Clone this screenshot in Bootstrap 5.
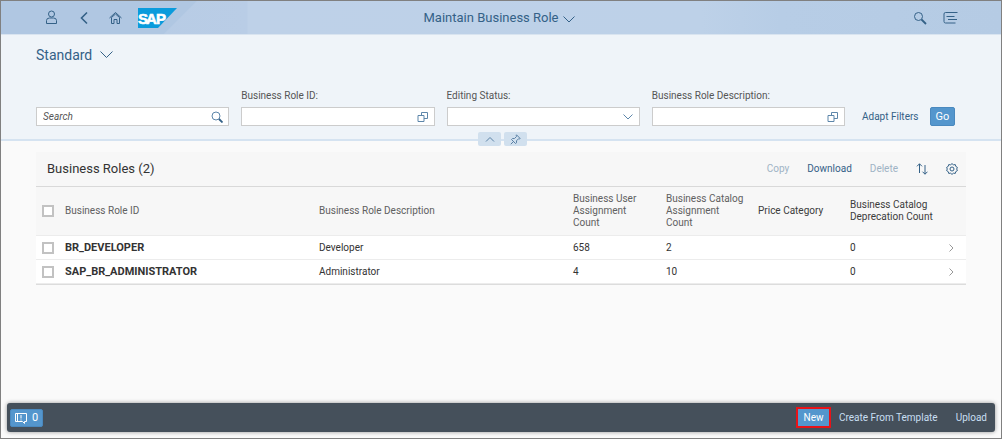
<!DOCTYPE html>
<html lang="en">
<head>
<meta charset="utf-8">
<meta name="viewport" content="width=device-width, initial-scale=1">
<title>Maintain Business Role</title>
<link href="https://cdn.jsdelivr.net/npm/bootstrap@5.3.0/dist/css/bootstrap.min.css" rel="stylesheet">
<style>
body{font-family:Roboto,"Liberation Sans",sans-serif;font-size:10px;line-height:12px;color:#333;background:#fafafa}
.app{border:1px solid #808080}
svg{display:block;fill:none;stroke:currentColor;flex:none}
.plain{background:none;border:0;padding:0;color:#346187;font-size:10px;line-height:12px}
.plain:disabled{color:#9fb3c5}
.shell{height:34px;padding:0 35px;border-bottom:1px solid #d9e4f0;background:linear-gradient(135deg,#b0c7e2 0,#b0c7e2 138px,transparent 139px),linear-gradient(90deg,#b5cae4,#b9cde6 246px,#bed1e8 247px,#bdd1e8 70%,#b7cde6 78%,#b5cbe4)}
.shell .shell-title{font-size:13px;line-height:18px;padding-left:4px}
.filters{background:#eff4f9;padding:11px 35px 13px;border-bottom:2px solid #d5e3f1}
.variant{font-size:14px;line-height:18px}
.filter-row{gap:12px;margin-top:26px}
.filter-row label{color:#555;display:block;height:12px;margin-bottom:5px}
.field{position:relative}
.field input,.field select{width:100%;height:19px;border:1px solid #ccc;border-radius:0;background:#fff;padding:0 24px 0 6px;font-size:10px;line-height:14px;appearance:none;color:#333;display:block}
.field input::placeholder{color:#555;font-style:italic;opacity:1}
.field svg{position:absolute;right:6px;top:50%;transform:translateY(-50%);color:#5d86aa;pointer-events:none}
.filter-actions{width:109px;padding-left:5px;padding-right:11px;height:19px}
.blue{background:#5496cd;border:1px solid #4a89bf;border-radius:2px;color:#fff;font-size:11px;line-height:12px}
.go{width:25px;height:19px;padding:0}
.handles{height:14px;margin-top:-9px;gap:3px;padding-left:3px;position:relative}
.handles button{width:23px;height:14px;background:#d1e0ee;border:0;border-radius:2px;padding:0;color:#5a81a5}
.content{padding:6px 35px 0}
.toolbar{height:34px;background:#f7f7f7;padding:0 8px 0 11px;gap:18px}
.toolbar h1{font-size:13px;line-height:16px;font-weight:400;margin:0}
.roles{table-layout:fixed;width:100%;border-top:1px solid #d9d9d9;border-bottom:1px solid #dcdcdc;border-collapse:separate;border-spacing:0}
.roles th,.roles td{padding:0 12px 0 0;vertical-align:middle;text-align:left;font-weight:400}
.roles thead th{height:49px;background:#f7f7f7;color:#606060;border-bottom:1px solid #ececec}
.roles thead th.dark{color:#3c3c3c}
.roles tbody td,.roles tbody th{height:24px;background:#fff;border-bottom:1px solid #ececec}
.roles tbody th{font-size:11px;font-weight:700}
.roles input{appearance:none;width:12px;height:12px;border:2px solid #c2c2c2;background:#fff;margin:0 0 0 6px;display:block}
.roles .end-cell{color:#999;padding:0}
.actions-bar{height:29px;margin:0 6px 6px;background:#45505b;border-radius:3px;padding:0 8px 0 3px;gap:18px;box-shadow:0 0 4px rgba(0,0,0,.4)}
.actions-bar .plain{color:#c8dff2}
.actions-bar .blue{font-size:10px}
.actions-bar .msg{font-size:11px;height:18px;width:33px;padding:0;gap:5px}
.new-btn{height:21px;width:35px;padding:0;border:2px solid #e81318;border-radius:0}
</style>
</head>
<body>
<div class="app d-flex flex-column min-vh-100">
  <header class="shell d-flex align-items-center">
    <div class="d-flex align-items-center col">
      <button class="plain ms-2" aria-label="User"><svg width="15" height="15" viewBox="0 0 15 15"><circle cx="7.500" cy="4" r="3"/><path d="M2.500 13.500v-3q0-2.500 3-2.500h4q3 0 3 2.500v3z"/></svg></button>
      <button class="plain mx-3 px-1" aria-label="Back"><svg width="10" height="14" viewBox="0 0 10 14" stroke-width="1.600"><path d="M8 1.500 2.500 7 8 12.500"/></svg></button>
      <button class="plain me-3" aria-label="Home"><svg width="13" height="14" viewBox="0 0 13 14"><path d="M.5 7 6.500 1.500 12.500 7M2.500 6.500v6h2.500v-4h3v4h2.500v-6L6.500 3z"/></svg></button>
      <a href="#" aria-label="SAP"><svg width="39" height="20" viewBox="0 0 39 20"><path d="M0 0h39L20 20H0z" fill="#0a9bdc" stroke="none"/><text x="0 8 18" y="15.500" font-family="Liberation Sans,sans-serif" font-size="15" font-weight="700" fill="#fff" stroke="#fff" stroke-width=".6">SAP</text></svg></a>
    </div>
    <button class="plain shell-title d-flex align-items-center gap-1">Maintain Business Role <svg class="mt-1" width="12" height="7" viewBox="0 0 12 7"><path d="m.5.5 5.500 5.500 5.500-5.500"/></svg></button>
    <div class="col d-flex justify-content-end gap-3 pe-2">
      <button class="plain" aria-label="Search"><svg width="14" height="14" viewBox="0 0 14 14"><circle cx="5.500" cy="5.500" r="4"/><path d="m8.500 8.500 4.500 4.500" stroke-width="1.800"/></svg></button>
      <button class="plain" aria-label="Menu"><svg width="15" height="14" viewBox="0 0 15 14"><path d="M14.500 1.500h-12q-1.500 0-1.500 1.500v7.500q0 1.500 1.500 1.500h10M3.500 5.500h8M5 8.500h9"/></svg></button>
    </div>
  </header>

  <section class="filters">
    <button class="plain variant d-flex align-items-center gap-1">Standard <svg class="ms-1" width="13" height="8" viewBox="0 0 13 8"><path d="m.5.5 6 6 6-6"/></svg></button>
    <form class="filter-row d-flex align-items-end" onsubmit="return false">
      <div class="col">
        <div class="field"><input type="search" placeholder="Search" aria-label="Search"><svg width="12" height="12" viewBox="0 0 12 12"><circle cx="5" cy="5" r="4"/><path d="m8 8 3.500 3.500" stroke="#346187" stroke-width="1.800"/></svg></div>
      </div>
      <div class="col">
        <label for="rid">Business Role ID:</label>
        <div class="field"><input id="rid" type="text"><svg width="12" height="12" viewBox="0 0 12 12"><path d="M1 4.500h6v6H1zM4.500 4.500v-3h6v6H7"/></svg></div>
      </div>
      <div class="col">
        <label for="status">Editing Status:</label>
        <div class="field"><select id="status"><option></option></select><svg width="12" height="7" viewBox="0 0 12 7"><path d="m1.500 1 4.500 4.500 4.500-4.500"/></svg></div>
      </div>
      <div class="col">
        <label for="desc">Business Role Description:</label>
        <div class="field"><input id="desc" type="text"><svg width="12" height="12" viewBox="0 0 12 12"><path d="M1 4.500h6v6H1zM4.500 4.500v-3h6v6H7"/></svg></div>
      </div>
      <div class="filter-actions d-flex align-items-center justify-content-between">
        <button type="button" class="plain text-nowrap">Adapt Filters</button>
        <button type="submit" class="blue go">Go</button>
      </div>
    </form>
  </section>
  <div class="handles d-flex justify-content-center">
    <button class="d-flex align-items-center justify-content-center" aria-label="Collapse header"><svg width="10" height="6" viewBox="0 0 10 6"><path d="M1 5.500 5 1.500l4 4"/></svg></button>
    <button class="d-flex align-items-center justify-content-center" aria-label="Pin header"><svg width="11" height="11" viewBox="0 0 11 11"><path d="m6.500.8 3.700 3.700-1 .5-.7-.2-2 2v2L5.500 9.500 1.500 5.500l1-1h2l2-2-.3-.7zM3.500 7.500.8 10.200"/></svg></button>
  </div>

  <main class="content">
    <div class="toolbar d-flex align-items-center">
      <h1 class="me-auto">Business Roles (2)</h1>
      <button class="plain" disabled>Copy</button>
      <button class="plain">Download</button>
      <button class="plain" disabled>Delete</button>
      <button class="plain" aria-label="Sort"><svg width="12" height="12" viewBox="0 0 12 12"><path d="M3.500 10V.8M1 3.300 3.500.8 6 3.300M9 2v9.200M6.500 8.700 9 11.200l2.500-2.500"/></svg></button>
      <button class="plain" aria-label="Settings"><svg width="12" height="12" viewBox="0 0 12 12"><path d="m6 .6 1.400 1.200 1.900-.2.500 1.800 1.600 1-.7 1.600.7 1.600-1.600 1-.5 1.800-1.900-.2L6 11.400l-1.400-1.200-1.900.2-.5-1.800-1.600-1L1.300 6 .6 4.400l1.600-1 .5-1.800 1.900.2z"/><circle cx="6" cy="6" r="2"/></svg></button>
    </div>
    <table class="roles">
      <colgroup><col style="width:29px"><col><col><col style="width:93px"><col style="width:92px"><col style="width:92px"><col style="width:99px"><col style="width:17px"></colgroup>
      <thead>
        <tr><th><input type="checkbox" aria-label="Select all"></th><th>Business Role ID</th><th>Business Role Description</th><th>Business User Assignment Count</th><th>Business Catalog Assignment Count</th><th class="dark">Price Category</th><th class="dark">Business Catalog Deprecation Count</th><th></th></tr>
      </thead>
      <tbody>
        <tr><td><input type="checkbox" aria-label="Select BR_DEVELOPER"></td><th scope="row">BR_DEVELOPER</th><td>Developer</td><td>658</td><td>2</td><td></td><td>0</td><td class="end-cell"><svg width="5" height="8" viewBox="0 0 5 8"><path d="m.5.5 3.500 3.500L.5 7.500"/></svg></td></tr>
        <tr><td><input type="checkbox" aria-label="Select SAP_BR_ADMINISTRATOR"></td><th scope="row">SAP_BR_ADMINISTRATOR</th><td>Administrator</td><td>4</td><td>10</td><td></td><td>0</td><td class="end-cell"><svg width="5" height="8" viewBox="0 0 5 8"><path d="m.5.5 3.500 3.500L.5 7.500"/></svg></td></tr>
      </tbody>
    </table>
  </main>

  <footer class="actions-bar d-flex align-items-center mt-auto">
    <button class="blue msg d-flex align-items-center justify-content-center me-auto"><svg width="12" height="12" viewBox="0 0 12 12"><path d="M.5 1.500h11v8H9.500v2l-2-2h-7zM2.500 1.500v8M6 3v3.500M6 7.500v1"/></svg>0</button>
    <div class="d-flex align-items-center gap-2">
      <button class="blue new-btn">New</button>
      <button class="plain">Create From Template</button>
    </div>
    <button class="plain">Upload</button>
  </footer>
</div>
<script src="https://cdn.jsdelivr.net/npm/bootstrap@5.3.0/dist/js/bootstrap.bundle.min.js"></script>
</body>
</html>
